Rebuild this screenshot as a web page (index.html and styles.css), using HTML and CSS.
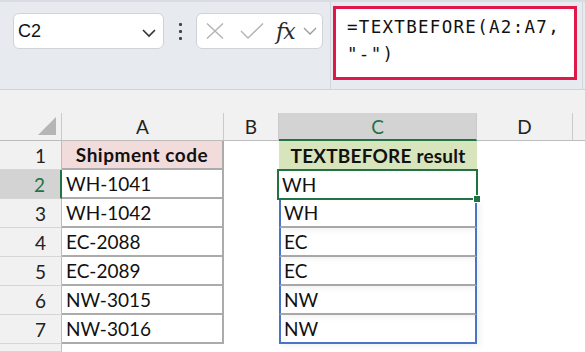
FILE: index.html
```html
<!DOCTYPE html>
<html lang="en">
<head>
    <meta charset="UTF-8">
    <title>TEXTBEFORE example</title>
    <link rel="stylesheet" href="styles.css">
</head>
<body>
    <!-- Formula bar -->
    <div class="topbar">
        <div class="namebox">
            <span>C2</span>
            <svg class="chev" width="16" height="10" viewBox="0 0 16 10"><path d="M2 2 L8 8 L14 2" fill="none" stroke="#333" stroke-width="1.6"/></svg>
        </div>
        <div class="grip"><i></i><i></i><i></i></div>
        <div class="fxbox">
            <svg width="18" height="16" viewBox="0 0 18 16"><path d="M1 0.5 L17 15.5 M17 0.5 L1 15.5" stroke="#b3b3b3" stroke-width="1.4"/></svg>
            <svg width="24" height="16" viewBox="0 0 24 16"><path d="M1 8 L8 15 L23 0.5" fill="none" stroke="#b3b3b3" stroke-width="1.4"/></svg>
            <span class="fx">fx</span>
            <svg width="14" height="8" viewBox="0 0 14 8"><path d="M1 1 L7 7 L13 1" fill="none" stroke="#9a9a9a" stroke-width="1.3"/></svg>
        </div>
        <div class="formula-wrap">
            <div class="formula">=TEXTBEFORE(A2:A7,<br>"-")</div>
        </div>
    </div>

    <div class="band"></div>

    <!-- Sheet -->
    <div class="sheet">
        <div class="corner"><svg width="20" height="20" viewBox="0 0 20 20"><path d="M19 1 L19 19 L1 19 Z" fill="#b5b5b5"/></svg></div>
        <div class="colhead">A</div>
        <div class="colhead">B</div>
        <div class="colhead active">C</div>
        <div class="colhead">D</div>
        <div class="colhead last"></div>

        <div class="rowhead">1</div>
        <div class="cell a head-a">Shipment code</div>
        <div class="cell"></div>
        <div class="cell head-c">TEXTBEFORE result</div>
        <div class="cell"></div>
        <div class="cell"></div>

        <div class="rowhead active">2</div>
        <div class="cell a">WH-1041</div>
        <div class="cell"></div>
        <div class="cell c selected">WH<span class="handle"></span></div>
        <div class="cell"></div>
        <div class="cell"></div>

        <div class="rowhead">3</div>
        <div class="cell a">WH-1042</div>
        <div class="cell"></div>
        <div class="cell c spill">WH</div>
        <div class="cell"></div>
        <div class="cell"></div>

        <div class="rowhead">4</div>
        <div class="cell a">EC-2088</div>
        <div class="cell"></div>
        <div class="cell c spill">EC</div>
        <div class="cell"></div>
        <div class="cell"></div>

        <div class="rowhead">5</div>
        <div class="cell a">EC-2089</div>
        <div class="cell"></div>
        <div class="cell c spill">EC</div>
        <div class="cell"></div>
        <div class="cell"></div>

        <div class="rowhead">6</div>
        <div class="cell a">NW-3015</div>
        <div class="cell"></div>
        <div class="cell c spill">NW</div>
        <div class="cell"></div>
        <div class="cell"></div>

        <div class="rowhead">7</div>
        <div class="cell a">NW-3016</div>
        <div class="cell"></div>
        <div class="cell c spill spill-end">NW</div>
        <div class="cell"></div>
        <div class="cell"></div>

        <div class="rowhead"></div>
        <div class="cell"></div>
        <div class="cell"></div>
        <div class="cell"></div>
        <div class="cell"></div>
        <div class="cell"></div>
    </div>
</body>
</html>
```

FILE: styles.css
```css
body {
    margin: 0;
    width: 585px;
    height: 352px;
    overflow: hidden;
    background: #ffffff;
    font-family: 'Lato', 'Noto Sans', sans-serif;
    color: #1a1a1a;
}

/* Formula bar */
.topbar {
    height: 90px;
    box-sizing: border-box;
    background: #e7ebef;
    border-top: 2px solid #d9dde1;
    border-bottom: 1px solid #cfd3d7;
    display: flex;
    align-items: flex-start;
    padding-left: 13px;
}

.namebox {
    margin-top: 11px;
    width: 151px;
    height: 36px;
    box-sizing: border-box;
    background: #ffffff;
    border: 1px solid #cfd2d6;
    border-radius: 6px;
    display: flex;
    align-items: center;
    justify-content: space-between;
    padding: 1px 6px 0 4px;
    font-family: 'Liberation Sans', Arial, sans-serif;
    font-size: 18px;
    color: #111;
}

.namebox .chev {
    margin-top: 2px;
}

.grip {
    width: 32px;
    margin-top: 21px;
    display: flex;
    flex-direction: column;
    align-items: center;
    gap: 4px;
}

.grip i {
    width: 3px;
    height: 3px;
    background: #444;
    border-radius: 1px;
}

.fxbox {
    margin-top: 11px;
    width: 127px;
    height: 36px;
    box-sizing: border-box;
    background: #ffffff;
    border: 1px solid #cfd2d6;
    border-radius: 6px;
    display: flex;
    align-items: center;
    padding-left: 9px;
}

.fxbox svg:nth-child(2) {
    margin-left: 16px;
}

.fx {
    margin-left: 12px;
    font-family: 'DejaVu Serif', 'Liberation Serif', serif;
    font-style: italic;
    font-size: 22px;
    color: #2a2a2a;
    letter-spacing: -1px;
}

.fxbox svg:last-child {
    margin-left: 8px;
}

.formula-wrap {
    margin-left: 7px;
    height: 88px;
    width: 253px;
    box-sizing: border-box;
    border-left: 1px solid #d3d6da;
    border-right: 1px solid #d3d6da;
    padding: 4px 0 0 2px;
}

.formula {
    width: 244px;
    height: 74px;
    box-sizing: border-box;
    background: #ffffff;
    border: 3px solid #e0174a;
    padding: 5px 0 0 11px;
    font-family: 'DejaVu Sans Mono', 'Liberation Mono', monospace;
    font-size: 17.5px;
    letter-spacing: 1.3px;
    line-height: 27px;
    color: #111;
}

.band {
    height: 23px;
    background: #f1f1f1;
}

/* Sheet grid */
.sheet {
    display: grid;
    grid-template-columns: 62px 162px 55px 198px 96px 1fr;
    grid-template-rows: 28px repeat(7, 29px) 1fr;
    height: 239px;
    font-size: 19px;
}

.corner {
    background: #f1f1f1;
    border-right: 1px solid #cacaca;
    border-bottom: 1px solid #bdbdbd;
    display: flex;
    justify-content: flex-end;
    align-items: flex-end;
    padding: 0 4px 4px 0;
}

.colhead {
    background: #f1f1f1;
    border-right: 1px solid #cacaca;
    border-bottom: 1px solid #bdbdbd;
    display: flex;
    align-items: center;
    justify-content: center;
    color: #222;
}

.colhead.active {
    background: #d3d3d3;
    color: #217346;
    border-bottom: 2px solid #217346;
}

.colhead.last {
    border-right: none;
}

.rowhead {
    background: #f1f1f1;
    border-right: 1px solid #bdbdbd;
    border-bottom: 1px solid #d6d6d6;
    display: flex;
    align-items: center;
    justify-content: flex-end;
    padding-right: 15px;
    color: #222;
}

.rowhead.active {
    background: #d3d3d3;
    color: #217346;
    border-right: 2px solid #217346;
}

.cell {
    display: flex;
    align-items: center;
    padding-left: 4px;
    white-space: nowrap;
    color: #111;
}

.cell.a {
    border-right: 2px solid #ababab;
    border-bottom: 2px solid #ababab;
}

.head-a {
    background: #f2dcdb;
    font-weight: bold;
    letter-spacing: 0.5px;
    justify-content: center;
    padding-left: 0;
}

.head-c {
    background: #d8e4bc;
    font-weight: bold;
    letter-spacing: 0.2px;
    justify-content: center;
    padding-left: 0;
}

.cell.c {
    padding-left: 3px;
}

.selected {
    position: relative;
    border: 2px solid #217346;
    margin: -1px -1px -1px -2px;
    padding-left: 5px;
}

.handle {
    position: absolute;
    right: -5px;
    bottom: -5px;
    width: 6px;
    height: 6px;
    background: #217346;
    border: 1px solid #ffffff;
}

.spill {
    border-left: 2px solid #4a75c6;
    border-right: 2px solid #4a75c6;
    border-bottom: 2px solid #a9a9a9;
    box-shadow: 3px 2px 6px rgba(0, 0, 0, 0.06);
}

.spill-end {
    border-bottom: 2px solid #4a75c6;
}
```
